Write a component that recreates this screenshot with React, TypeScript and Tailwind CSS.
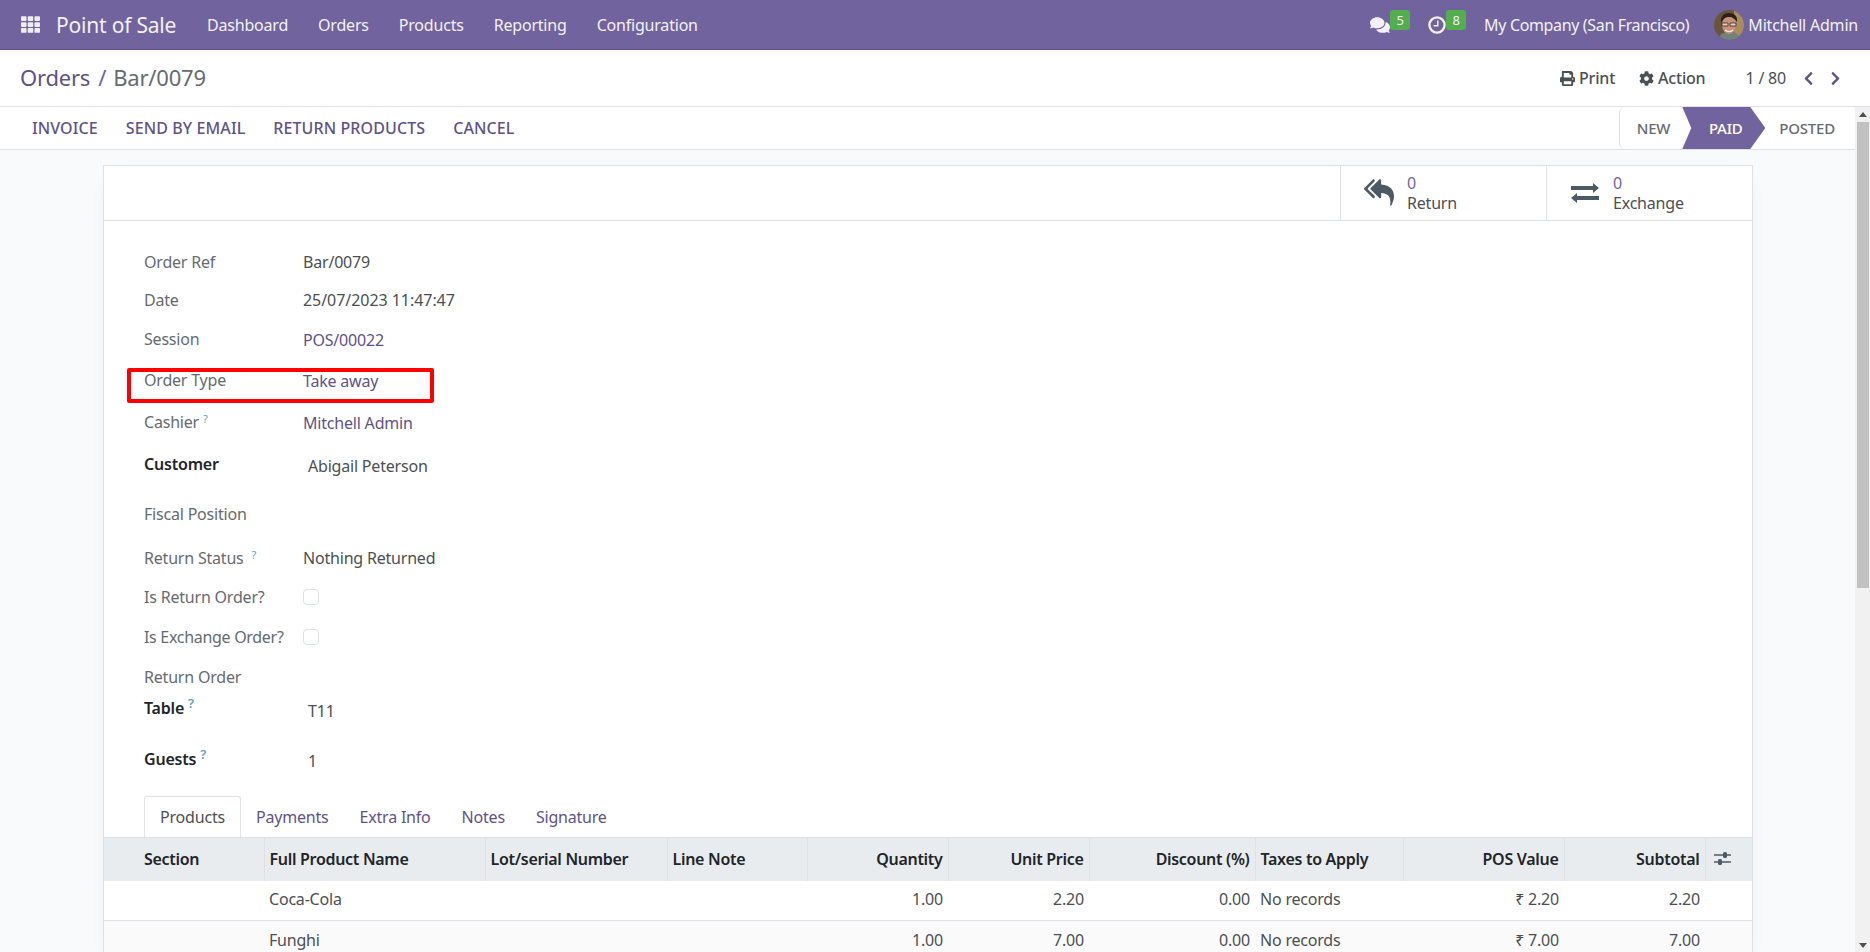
import React from "react";
import { FaComments, FaTh, FaPrint, FaCog, FaChevronLeft, FaChevronRight } from "react-icons/fa";

const FONT = "font-['Noto_Sans','Liberation_Sans',sans-serif]";

function Help({ className = "" }: { className?: string }) {
  return <sup className={`text-[11px] text-[#5ba4c7] ${className}`}>?</sup>;
}

type RowProps = { h: string; label: React.ReactNode; children?: React.ReactNode; vc?: string; lc?: string; overlay?: React.ReactNode };
function Row({ h, label, children, vc = "", lc = "text-[#666b70]", overlay }: RowProps) {
  return (
    <div className={`relative flex items-center ${h}`}>
      {overlay}
      <div className={`w-[159px] shrink-0 ${lc}`}>{label}</div>
      <div className={vc}>{children}</div>
    </div>
  );
}

function Avatar() {
  return (
    <svg viewBox="0 0 30 30" className="h-[30px] w-[30px] rounded-full">
      <rect width="30" height="30" fill="#6a533e" />
      <path d="M20 0h10v30H20z" fill="#a98d5e" />
      <path d="M5 30c0-6 4-8 10-8s11 2 11 8z" fill="#74807e" />
      <ellipse cx="15" cy="15" rx="7" ry="9" fill="#c8927a" />
      <path d="M7 13C6 6 10 3 15 3s9 3 8 9c-2-3-4-5-8-5s-6 2-8 6z" fill="#2a211c" />
      <path d="M8 13h6v3H8zM16 13h6v3h-6z" fill="#e2cdbd" stroke="#3a2b25" strokeWidth="0.8" />
      <path d="M11 20c2 2 6 2 8 0" stroke="#f4ece6" strokeWidth="1.2" fill="none" />
    </svg>
  );
}

function ClockIcon() {
  return (
    <svg viewBox="0 0 18 18" className="ml-[18px] h-[18px] w-[18px]" fill="none" stroke="currentColor">
      <circle cx="9" cy="9" r="7.6" strokeWidth="2.3" />
      <path d="M9.8 4.6v5.2H5.6" strokeWidth="1.4" />
    </svg>
  );
}

function ReplyAllIcon() {
  return (
    <svg viewBox="0 0 1792 1792" className="h-[30px] w-[30px] text-[#4c5a66]" fill="currentColor">
      <path d="M640 1082v70q0 42-39 59-13 5-25 5-27 0-45-19l-512-512q-19-19-19-45t19-45l512-512q18-19 45-19 12 0 25 5 39 17 39 59v69l-397 398q-19 19-19 45t19 45zm1152 38q0 58-17 133.500t-38.500 138-48 125-40.500 90.500l-20 40q-8 17-28 17-6 0-9-1-25-8-23-34 43-400-106-565-64-71-170.500-110.500t-267.500-52.500v251q0 42-39 59-13 5-25 5-27 0-45-19l-512-512q-19-19-19-45t19-45l512-512q18-19 45-19 12 0 25 5 39 17 39 59v262q411 28 599 236 169 187 169 484z" />
    </svg>
  );
}

function ExchangeIcon() {
  return (
    <svg viewBox="0 0 28 20" className="h-[20px] w-[28px] text-[#4c5a66]" fill="currentColor">
      <path d="M0 3h22V0l6 5-6 5V7H0zM28 13H6v-3l-6 5 6 5v-3h22z" />
    </svg>
  );
}

function SlidersIcon() {
  return (
    <svg viewBox="0 0 17 13" className="h-[13px] w-[17px] text-[#4c5a66]" fill="currentColor">
      <path d="M0 2.300h17v1.400H0zM0 9.300h17v1.400H0z" />
      <rect x="9" y="0" width="4" height="6" rx="1.500" />
      <rect x="4" y="7" width="4" height="6" rx="1.500" />
    </svg>
  );
}

const cols = ["w-[160px]", "w-[221px]", "w-[182px]", "w-[140px]", "w-[141px]", "w-[141px]", "w-[166px]", "w-[148px]", "w-[161px]", "w-[141px]", "w-[47px]"];

export default function App() {
  return (
    <div className={`flex h-[952px] w-[1870px] flex-col overflow-hidden bg-white text-[16px] leading-[24px] text-[#4c4f53] tracking-[-0.2px] ${FONT}`}>
      <header className="flex h-[50px] shrink-0 items-center border-b border-[#5f5288] bg-[#71639e] text-[#f3f1f7]">
        <FaTh className="ml-[21px] h-[19px] w-[19px] text-[#efedf4]" />
        <span className="ml-[16px] w-[121px] text-[21px]">Point of Sale</span>
        <nav className="ml-[30px] flex gap-[30px]">
          <span>Dashboard</span>
          <span>Orders</span>
          <span>Products</span>
          <span>Reporting</span>
          <span>Configuration</span>
        </nav>
        <div className="ml-auto flex items-center">
          <FaComments className="h-[20px] w-[20px] text-[#f3f1f7]" />
          <span className="mb-[10px] flex h-[20px] w-[20px] items-center justify-center rounded-[3px] bg-[#54ad4f] text-[13px] text-[#f3f1f7]">5</span>
          <ClockIcon />
          <span className="mb-[10px] flex h-[20px] w-[20px] items-center justify-center rounded-[3px] bg-[#54ad4f] text-[13px] text-[#f3f1f7]">8</span>
          <span className="ml-[18px] tracking-[-0.35px]">My Company (San Francisco)</span>
          <span className="ml-[25px]"><Avatar /></span>
          <span className="ml-[4px] mr-[12px]">Mitchell Admin</span>
        </div>
      </header>

      <div className="flex h-[57px] shrink-0 items-center justify-between border-b border-[#dee2e6] pl-[20px] pr-[27px]">
        <div className="pb-[2px] text-[22px] text-[#5f5288]">
          Orders<span className="ml-[8px] mr-[7px] text-[#71639e]">/</span><span className="text-[#666b70]">Bar/0079</span>
        </div>
        <div className="flex items-center">
          <FaPrint className="h-[15px] w-[15px] text-[#4c4f53]" />
          <span className="ml-[4px] font-medium">Print</span>
          <FaCog className="ml-[24px] h-[15px] w-[15px]" />
          <span className="ml-[4px] font-medium">Action</span>
          <span className="ml-[40px]">1 / 80</span>
          <FaChevronLeft className="ml-[15px] h-[15px] w-[15px] text-[#5f5288]" />
          <FaChevronRight className="ml-[12px] h-[15px] w-[15px] text-[#5f5288]" />
        </div>
      </div>

      <div className="flex min-h-0 flex-1">
        <main className="flex min-w-0 flex-1 flex-col overflow-hidden bg-[#f9fafb]">
          <div className="flex h-[43px] shrink-0 items-center justify-between border-b border-[#dee2e6] bg-white pl-[32px]">
            <div className="flex gap-[28px] font-medium tracking-[0.1px] text-[#5f5288]">
              <span>INVOICE</span>
              <span>SEND BY EMAIL</span>
              <span>RETURN PRODUCTS</span>
              <span>CANCEL</span>
            </div>
            <div className="flex h-full items-center rounded-l-[6px] border-l border-[#dee2e6] text-[15px] font-medium text-[#666b70]">
              <span className="pl-[17px] pr-[12px]">NEW</span>
              <span className="flex h-full w-[83px] items-center justify-center bg-[#71639e] pl-[10px] pr-[6px] text-white [clip-path:polygon(0_0,68px_0,83px_50%,68px_100%,0_100%,9px_50%)]">PAID</span>
              <span className="pl-[14px] pr-[20px]">POSTED</span>
            </div>
          </div>

          <div className="ml-[103px] mr-[102px] mt-[15px] flex flex-1 flex-col border border-[#dee2e6] bg-white shadow-[0_5px_20px_-10px_rgba(0,0,0,0.1)]">
            <div className="flex h-[55px] shrink-0 justify-end border-b border-[#dee2e6]">
              <div className="flex w-[206px] items-center border-l border-[#dee2e6] pl-[23px]">
                <ReplyAllIcon />
                <div className="ml-[13px] leading-[20px]">
                  <div className="text-[#71639e]">0</div>
                  <div>Return</div>
                </div>
              </div>
              <div className="flex w-[206px] items-center border-l border-[#dee2e6] pl-[24px]">
                <ExchangeIcon />
                <div className="ml-[14px] leading-[20px]">
                  <div className="text-[#71639e]">0</div>
                  <div>Exchange</div>
                </div>
              </div>
            </div>

            <div className="px-[40px] pt-[21px]">
              <Row h="h-[39px]" label="Order Ref">Bar/0079</Row>
              <Row h="h-[38px]" label="Date" vc="tracking-[-0.05px]">25/07/2023 11:47:47</Row>
              <Row h="h-[39px]" label="Session" vc="pt-[2px] text-[#5f5288]">POS/00022</Row>
              <Row
                h="h-[44px]"
                label="Order Type"
                vc="pt-[2px] text-[#5f5288]"
                overlay={<div className="absolute left-[-17px] top-[10px] h-[35px] w-[307px] rounded-[2px] border-[4px] border-[#ff0000]" />}
              >
                Take away
              </Row>
              <Row h="h-[40px]" label={<>Cashier <Help /></>} vc="pt-[2px] text-[#5f5288]">Mitchell Admin</Row>
              <Row h="h-[44px]" label="Customer" lc="font-semibold text-[#212529]" vc="ml-[5px] pt-[4px]">Abigail Peterson</Row>
              <Row h="h-[56px]" label="Fiscal Position" />
              <Row h="h-[32px]" label={<>Return Status <Help className="ml-[4px]" /></>}>Nothing Returned</Row>
              <Row h="h-[46px]" label="Is Return Order?"><div className="h-[16px] w-[16px] rounded-[4px] border border-[#dee2e6]" /></Row>
              <Row h="h-[34px]" label={<span className="tracking-[-0.3px]">Is Exchange Order?</span>}><div className="h-[16px] w-[16px] rounded-[4px] border border-[#dee2e6]" /></Row>
              <Row h="h-[46px]" label="Return Order" />
              <Row h="h-[16px]" label={<>Table <Help className="text-[13px]" /></>} lc="font-semibold text-[#212529]" vc="ml-[5px] pt-[6px]">T11</Row>
              <Row h="h-[86px]" label={<>Guests <Help className="text-[13px]" /></>} lc="font-semibold text-[#212529]" vc="ml-[5px] pt-[4px]">1</Row>
            </div>

            <div className="relative mt-[-5px] flex h-[40px] shrink-0 items-end px-[40px]">
              <div className="flex h-[41px] w-[97px] items-center justify-center rounded-t-[3px] border border-b-0 border-[#dee2e6] bg-white pb-[1px]">Products</div>
              <div className="flex h-[40px] items-center gap-[31px] pb-[1px] pl-[15px] text-[#5f5288]">
                <span>Payments</span>
                <span>Extra Info</span>
                <span>Notes</span>
                <span>Signature</span>
              </div>
            </div>

            <table className="w-[1648px] table-fixed border-collapse">
              <colgroup>
                {cols.map((c, i) => <col key={i} className={c} />)}
              </colgroup>
              <thead>
                <tr className="h-[43px] border-t border-[#dee2e6] bg-[#e9ecef] tracking-[-0.3px] text-[#212529] [&>th]:border-r [&>th]:border-[#dee2e6] [&>th]:pb-[1px] [&>th]:font-semibold">
                  <th className="pl-[40px] text-left">Section</th>
                  <th className="pl-[5px] text-left">Full Product Name</th>
                  <th className="pl-[5px] text-left">Lot/serial Number</th>
                  <th className="pl-[5px] text-left">Line Note</th>
                  <th className="pr-[5px] text-right">Quantity</th>
                  <th className="pr-[5px] text-right">Unit Price</th>
                  <th className="pr-[5px] text-right">Discount (%)</th>
                  <th className="pl-[5px] text-left">Taxes to Apply</th>
                  <th className="pr-[5px] text-right">POS Value</th>
                  <th className="pr-[5px] text-right">Subtotal</th>
                  <th className="!border-r-0 pl-[8px]"><SlidersIcon /></th>
                </tr>
              </thead>
              <tbody>
                {[
                  ["Coca-Cola", "1.00", "2.20", "0.00", "₹ 2.20", "2.20", "bg-white"],
                  ["Funghi", "1.00", "7.00", "0.00", "₹ 7.00", "7.00", "bg-[#fafafa]"],
                ].map((r) => (
                  <tr key={r[0]} className={`h-[40px] border-b border-[#dee2e6] [&>td]:pb-[2px] ${r[6]}`}>
                    <td />
                    <td className="pl-[5px]">{r[0]}</td>
                    <td />
                    <td />
                    <td className="pr-[5px] text-right">{r[1]}</td>
                    <td className="pr-[5px] text-right">{r[2]}</td>
                    <td className="pr-[5px] text-right">{r[3]}</td>
                    <td className="pl-[5px]">No records</td>
                    <td className="pr-[5px] text-right">{r[4]}</td>
                    <td className="pr-[5px] text-right">{r[5]}</td>
                    <td />
                  </tr>
                ))}
              </tbody>
            </table>
          </div>
        </main>

        <aside className="flex w-[15px] shrink-0 flex-col items-center bg-[#f1f1f1]">
          <div className="mt-[5px] h-0 w-0 border-x-[4px] border-b-[5px] border-x-transparent border-b-[#505050]" />
          <div className="mt-[5px] h-[466px] w-[12px] bg-[#c1c1c1]" />
          <div className="mb-[4px] mt-auto h-0 w-0 border-x-[4px] border-t-[5px] border-x-transparent border-t-[#505050]" />
        </aside>
      </div>
    </div>
  );
}
